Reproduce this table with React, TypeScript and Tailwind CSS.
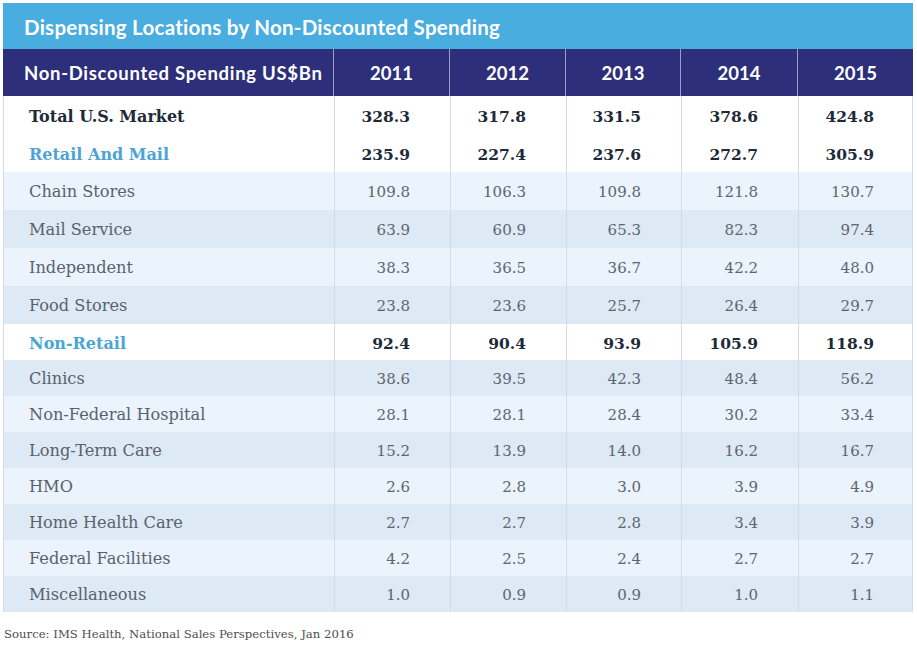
const years = ['2011', '2012', '2013', '2014', '2015'];

type Row = { label: string; values: string[]; kind: 'total' | 'group' | 'item' };

const rows: Row[] = [
  { label: 'Total U.S. Market', values: ['328.3', '317.8', '331.5', '378.6', '424.8'], kind: 'total' },
  { label: 'Retail And Mail', values: ['235.9', '227.4', '237.6', '272.7', '305.9'], kind: 'group' },
  { label: 'Chain Stores', values: ['109.8', '106.3', '109.8', '121.8', '130.7'], kind: 'item' },
  { label: 'Mail Service', values: ['63.9', '60.9', '65.3', '82.3', '97.4'], kind: 'item' },
  { label: 'Independent', values: ['38.3', '36.5', '36.7', '42.2', '48.0'], kind: 'item' },
  { label: 'Food Stores', values: ['23.8', '23.6', '25.7', '26.4', '29.7'], kind: 'item' },
  { label: 'Non-Retail', values: ['92.4', '90.4', '93.9', '105.9', '118.9'], kind: 'group' },
  { label: 'Clinics', values: ['38.6', '39.5', '42.3', '48.4', '56.2'], kind: 'item' },
  { label: 'Non-Federal Hospital', values: ['28.1', '28.1', '28.4', '30.2', '33.4'], kind: 'item' },
  { label: 'Long-Term Care', values: ['15.2', '13.9', '14.0', '16.2', '16.7'], kind: 'item' },
  { label: 'HMO', values: ['2.6', '2.8', '3.0', '3.9', '4.9'], kind: 'item' },
  { label: 'Home Health Care', values: ['2.7', '2.7', '2.8', '3.4', '3.9'], kind: 'item' },
  { label: 'Federal Facilities', values: ['4.2', '2.5', '2.4', '2.7', '2.7'], kind: 'item' },
  { label: 'Miscellaneous', values: ['1.0', '0.9', '0.9', '1.0', '1.1'], kind: 'item' },
];

const cols = 'grid grid-cols-[330px_116px_116px_115px_117px_116px]';
const serif = "font-['DejaVu_Serif','Liberation_Serif',serif]";
const sans = "font-['Lato','Open_Sans',sans-serif]";

export default function App() {
  let itemIndex = 0;
  return (
    <div className="w-[917px] h-[650px] bg-white pt-[3px] pl-[3px]">
      <div className="w-[910px]">
        <div
          className={`h-[46px] bg-[#4aade0] flex items-center pt-[3px] pl-[21px] text-white text-[20.5px] tracking-[0.25px] font-bold ${sans}`}
        >
          Dispensing Locations by Non-Discounted Spending
        </div>
        <div className={`${cols} h-[47px] bg-[#2d2f7b] text-white font-bold ${sans}`}>
          <div className="flex items-center pt-[3px] pl-[21px] text-[18.5px] tracking-[0.7px]">
            Non-Discounted Spending US$Bn
          </div>
          {years.map((y) => (
            <div
              key={y}
              className="flex items-center justify-center pt-[3px] border-l border-[#9c9ec6] text-[18.5px]"
            >
              {y}
            </div>
          ))}
        </div>
        <div className="border-l border-r border-[#d3dce5]">
          {rows.map((r, i) => {
            let bg = 'bg-white';
            if (r.kind === 'item') {
              bg = itemIndex % 2 === 0 ? 'bg-[#ebf3fc]' : 'bg-[#dde9f5]';
              itemIndex++;
            } else {
              itemIndex = 0;
            }
            if (r.label === 'Non-Retail') itemIndex = 1;
            const h = i < 6 ? 'h-[38px]' : 'h-[36px]';
            const labelCls =
              r.kind === 'total'
                ? 'font-bold text-[#1e2a38] text-[16px]'
                : r.kind === 'group'
                  ? 'font-bold text-[#4ba4d5] text-[16px]'
                  : 'text-[#58626c] text-[16.2px]';
            const valueCls =
              r.kind === 'item' ? 'text-[#5c666f] text-[15px]' : 'font-bold text-[#1e2a38] text-[15.5px]';
            return (
              <div key={r.label} className={`${cols} ${h} ${bg} ${serif}`}>
                <div className={`flex items-center pt-[3px] pl-[25px] ${labelCls}`}>{r.label}</div>
                {r.values.map((v, j) => (
                  <div
                    key={j}
                    className={`flex items-center justify-end pt-[3px] pr-[40px] border-l border-[#d3dce5] ${valueCls}`}
                  >
                    {v}
                  </div>
                ))}
              </div>
            );
          })}
        </div>
        <div className={`mt-[14px] ml-[1px] text-[11.7px] text-[#4e4e4e] ${serif}`}>
          Source: IMS Health, National Sales Perspectives, Jan 2016
        </div>
      </div>
    </div>
  );
}
